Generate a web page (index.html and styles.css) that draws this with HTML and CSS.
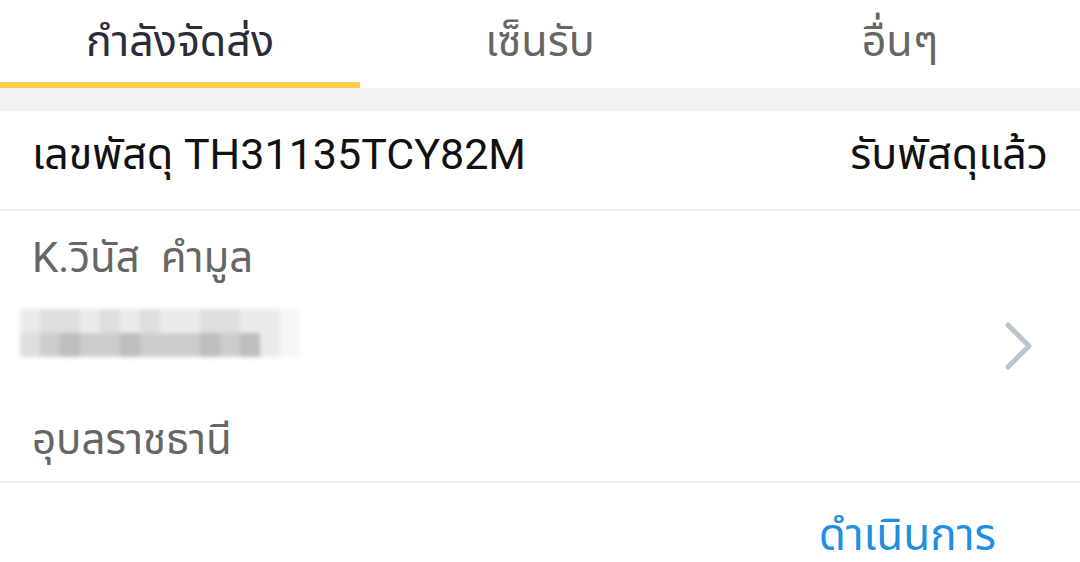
FILE: index.html
```html
<!DOCTYPE html>
<html lang="th">
<head>
  <meta charset="UTF-8">
  <title>พัสดุ</title>
  <link rel="stylesheet" href="styles.css">
</head>
<body>
  <div class="tabs">
    <div class="tab active">กำลังจัดส่ง</div>
    <div class="tab">เซ็นรับ</div>
    <div class="tab">อื่นๆ</div>
  </div>

  <div class="card">
    <div class="card-head">
      <span class="parcel-no">เลขพัสดุ TH31135TCY82M</span>
      <span class="status">รับพัสดุแล้ว</span>
    </div>
    <div class="card-body">
      <div class="info">
        <div class="name">K.วินัส&nbsp; คำมูล</div>
        <div class="phone">
          <div class="px-row">
            <span class="px p4"></span><span class="px p1"></span><span class="px p1"></span><span class="px p4"></span>
            <span class="px p1"></span><span class="px p4"></span><span class="px p1"></span><span class="px p4"></span>
            <span class="px p4"></span><span class="px p1"></span><span class="px p1"></span><span class="px p4"></span>
            <span class="px p4"></span><span class="px p5"></span>
          </div>
          <div class="px-row">
            <span class="px p1"></span><span class="px p2"></span><span class="px p3"></span><span class="px p2"></span>
            <span class="px p2"></span><span class="px p3"></span><span class="px p2"></span><span class="px p2"></span>
            <span class="px p2"></span><span class="px p3"></span><span class="px p2"></span><span class="px p3"></span>
            <span class="px p4"></span><span class="px p5"></span>
          </div>
        </div>
        <div class="city">อุบลราชธานี</div>
      </div>
      <svg class="chevron" width="30" height="50" viewBox="0 0 30 50">
        <path d="M4 4 L25 25 L4 46" fill="none" stroke="#bac6cd" stroke-width="5" stroke-linecap="round" stroke-linejoin="round"/>
      </svg>
    </div>
    <div class="card-foot">
      <a href="#" class="action">ดำเนินการ</a>
    </div>
  </div>
</body>
</html>
```

FILE: styles.css
```css
body {
  margin: 0;
  padding: 0;
  background-color: #f2f2f2;
  font-family: Roboto, "Noto Sans Thai", "Noto Sans", sans-serif;
  color: #111;
  overflow: hidden;
}
.tabs {
  display: flex;
  height: 88px;
  background: #fff;
}
.tab {
  flex: 1;
  display: flex;
  align-items: center;
  justify-content: center;
  font-size: 43px;
  color: #666;
  box-sizing: border-box;
  padding-top: 2px;
  border-bottom: 6px solid transparent;
}
.tab.active {
  color: #2b2c3a;
  border-bottom-color: #fdcf4c;
}
.card {
  margin-top: 23px;
  background: #fff;
}
.card-head {
  display: flex;
  justify-content: space-between;
  align-items: center;
  box-sizing: border-box;
  height: 100px;
  padding: 0 32px 10px;
  font-size: 43px;
  color: #111;
  border-bottom: 2px solid #efefef;
}
.card-body {
  display: flex;
  align-items: center;
  justify-content: space-between;
  box-sizing: border-box;
  height: 272px;
  padding: 0 46px 0 32px;
  border-bottom: 2px solid #efefef;
}
.info {
  display: flex;
  flex-direction: column;
  align-self: flex-start;
  padding-top: 22px;
}
.name, .city {
  font-size: 42px;
  color: #666;
  line-height: 50px;
}
.phone {
  display: flex;
  flex-direction: column;
  width: 280px;
  margin: 26px 0 58px -12px;
  filter: blur(2px);
}
.px-row {
  display: flex;
  height: 24px;
}
.px {
  width: 20px;
}
.p1 { background: #dedede; }
.p2 { background: #cdcdcd; }
.p3 { background: #bdbdbd; }
.p4 { background: #ebebeb; }
.p5 { background: #f6f6f6; }
.card-foot {
  display: flex;
  justify-content: flex-end;
  height: 80px;
  padding: 0 84px 0 0;
}
.action {
  font-size: 44px;
  color: #1e8fe1;
  text-decoration: none;
  padding-top: 20px;
}
```
